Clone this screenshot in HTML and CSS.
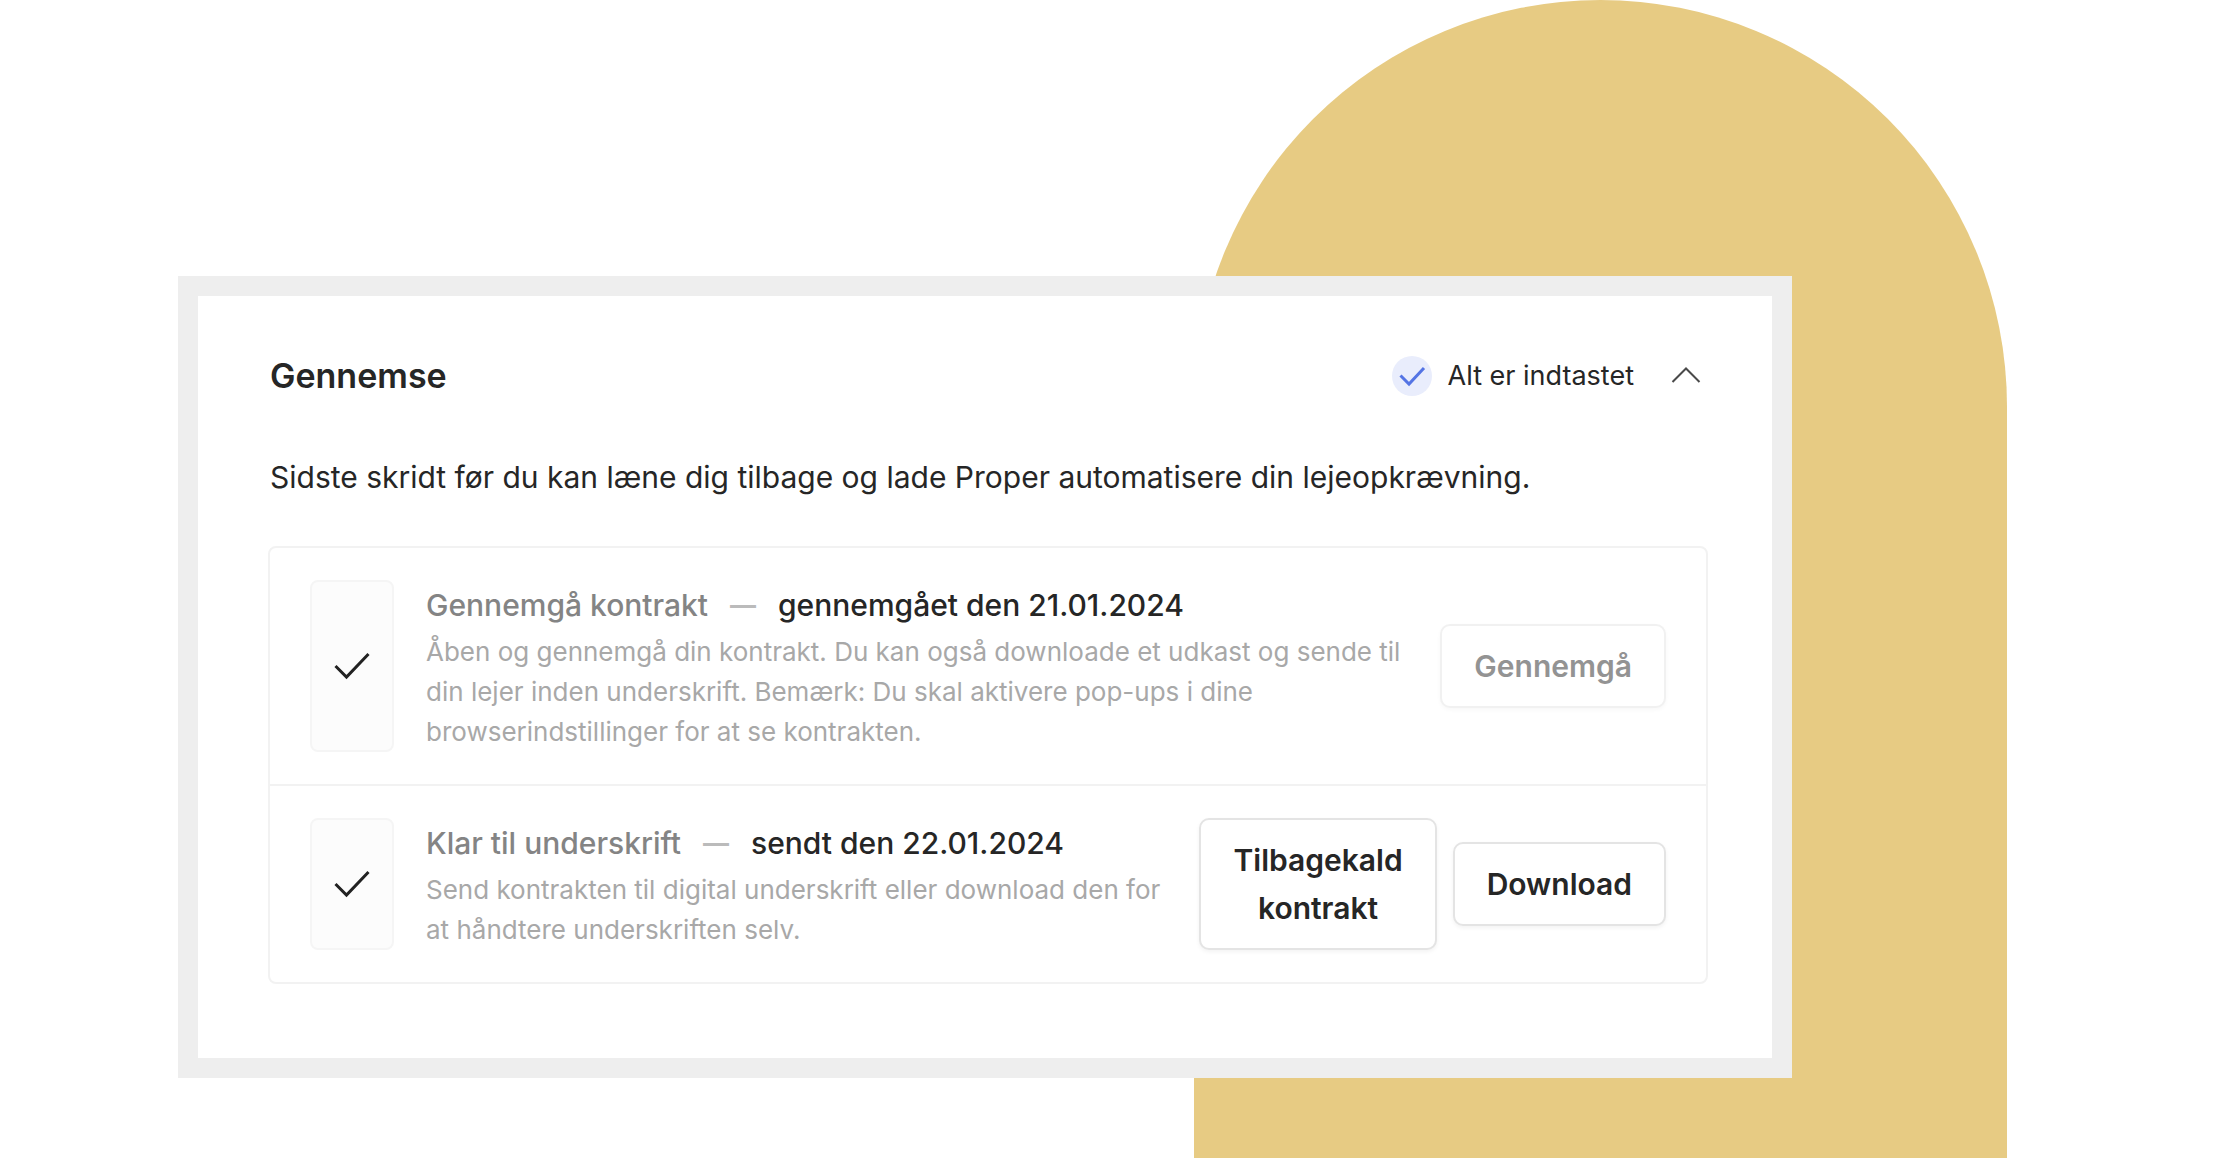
FILE: index.html
```
<!DOCTYPE html>
<html lang="da">
<head>
    <meta charset="UTF-8">
    <meta name="viewport" content="width=device-width, initial-scale=1.0">
    <title>Gennemse</title>
    <link rel="stylesheet" href="styles.css">
</head>
<body>
    <div class="scene">
        <div class="arch"></div>

        <main class="card">
            <header class="card-header">
                <h1>Gennemse</h1>
                <div class="status">
                    <span class="status-badge">
                        <svg width="40" height="40" viewBox="0 0 40 40" fill="none" stroke="#5474e4" stroke-width="3">
                            <path d="M8.5 19.5 L17 28 L32 12"/>
                        </svg>
                    </span>
                    <span class="status-text">Alt er indtastet</span>
                </div>
                <button type="button" class="toggle" aria-label="Skjul">
                    <svg width="40" height="40" viewBox="0 0 40 40" fill="none" stroke="#4a4a4a" stroke-width="2">
                        <path d="M6.5 26 L20 12.5 L33.5 26"/>
                    </svg>
                </button>
            </header>

            <p class="intro">Sidste skridt før du kan læne dig tilbage og lade Proper automatisere din lejeopkrævning.</p>

            <ul class="steps">
                <li class="step">
                    <div class="step-icon">
                        <svg width="40" height="40" viewBox="0 0 40 40" fill="none" stroke="#222" stroke-width="3">
                            <path d="M3.5 20 L14.5 31 L36.5 8"/>
                        </svg>
                    </div>
                    <div class="step-body">
                        <h2><span class="step-name">Gennemgå kontrakt</span><span class="dash">—</span><span>gennemgået den 21.01.2024</span></h2>
                        <p>Åben og gennemgå din kontrakt. Du kan også downloade et udkast og sende til din lejer inden underskrift. Bemærk: Du skal aktivere pop-ups i dine browserindstillinger for at se kontrakten.</p>
                    </div>
                    <div class="step-actions">
                        <button type="button" class="btn" disabled>Gennemgå</button>
                    </div>
                </li>
                <li class="step">
                    <div class="step-icon">
                        <svg width="40" height="40" viewBox="0 0 40 40" fill="none" stroke="#222" stroke-width="3">
                            <path d="M3.5 20 L14.5 31 L36.5 8"/>
                        </svg>
                    </div>
                    <div class="step-body">
                        <h2><span class="step-name">Klar til underskrift</span><span class="dash">—</span><span>sendt den 22.01.2024</span></h2>
                        <p>Send kontrakten til digital underskrift eller download den for at håndtere underskriften selv.</p>
                    </div>
                    <div class="step-actions">
                        <button type="button" class="btn">Tilbagekald<br>kontrakt</button>
                        <button type="button" class="btn">Download</button>
                    </div>
                </li>
            </ul>
        </main>
    </div>
</body>
</html>
```
FILE: styles.css
```
:root {
    --gold: #e7cb83;
    --frame: #eeeeee;
    --line: #f2f2f2;
    --text: #262626;
    --text-muted: #848484;
    --text-light: #a8a8a8;
    --blue-light: #e9edfc;
    --white: #ffffff;
}

* {
    margin: 0;
    padding: 0;
    box-sizing: border-box;
}

body {
    background-color: var(--white);
    color: var(--text);
    font-family: Inter, "Liberation Sans", sans-serif;
}

.scene {
    position: relative;
    min-height: 100vh;
    padding: 276px 428px 82px 178px;
}

/* decorative shape behind the card */
.arch {
    position: absolute;
    top: 0;
    right: 213px;
    bottom: 2px;
    width: 813px;
    background-color: var(--gold);
    border-radius: 407px 407px 0 0;
}

.card {
    position: relative;
    background-color: var(--white);
    border: 20px solid var(--frame);
    padding: 60px 64px 74px 70px;
}

.card-header {
    display: flex;
    align-items: center;
    height: 40px;
    padding: 0 2px;
    margin-bottom: 57px;
}

.card-header h1 {
    flex: 1;
    font-size: 34px;
    font-weight: 600;
    line-height: 40px;
}

.status {
    display: flex;
    align-items: center;
    gap: 16px;
    margin-right: 32px;
}

.status-badge {
    width: 40px;
    height: 40px;
    border-radius: 50%;
    background-color: var(--blue-light);
}

.status-text {
    font-size: 27px;
    line-height: 40px;
}

.toggle {
    width: 40px;
    height: 40px;
    border: none;
    background: none;
    cursor: pointer;
}

.intro {
    padding: 0 2px;
    font-size: 30px;
    line-height: 48px;
    margin-bottom: 45px;
}

.steps {
    list-style: none;
    border: 2px solid var(--line);
    border-radius: 8px;
}

.step {
    display: flex;
    padding: 32px 40px;
}

.step + .step {
    border-top: 2px solid var(--line);
}

.step-icon {
    display: flex;
    align-items: center;
    justify-content: center;
    flex: none;
    width: 84px;
    margin-right: 32px;
    background-color: #fcfcfc;
    border: 2px solid #f5f5f5;
    border-radius: 8px;
}

.step-body {
    flex: 1;
}

.step-body h2 {
    display: flex;
    font-size: 30px;
    font-weight: 500;
    line-height: 50px;
    margin-bottom: 2px;
}

.step-name {
    color: var(--text-muted);
}

.dash {
    margin: 0 22px;
    font-size: 26px;
    font-weight: 700;
    color: #bbbbbb;
}

.step-body p {
    font-size: 26px;
    line-height: 40px;
    color: var(--text-light);
}

.step-actions {
    display: flex;
    align-items: center;
    flex: none;
    gap: 16px;
    margin-left: 16px;
}

.btn {
    padding: 16px 32px;
    font-family: inherit;
    font-size: 30px;
    font-weight: 600;
    line-height: 48px;
    color: var(--text);
    background-color: var(--white);
    border: 2px solid #e4e4e4;
    border-radius: 10px;
    box-shadow: 0 2px 4px rgba(0, 0, 0, 0.05);
    cursor: pointer;
}

.btn:disabled {
    color: #939393;
    border-color: #f1f1f1;
    box-shadow: 0 2px 4px rgba(0, 0, 0, 0.03);
    cursor: default;
}
```
